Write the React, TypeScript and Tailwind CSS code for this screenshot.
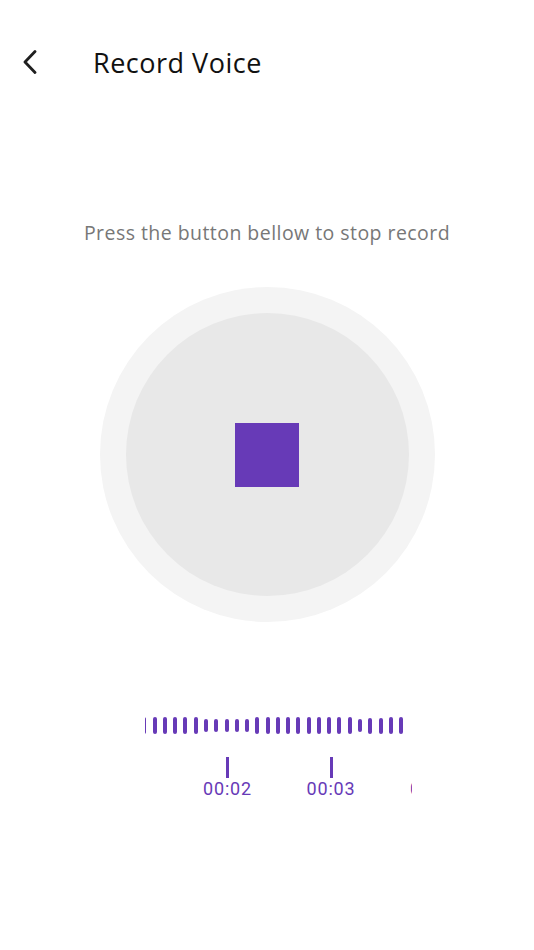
import React from "react";

const bars = [
  17, 17, 17, 17, 17, 17, 13, 13, 13, 13, 13, 17, 17, 17, 17, 17, 17, 17, 17, 17, 17, 13, 16, 16, 17, 17,
];

export default function App() {
  return (
    <div
      className="w-[534px] h-[950px] bg-white relative overflow-hidden"
      style={{ fontFamily: '"Open Sans", "Noto Sans", sans-serif' }}
    >
      {/* Header */}
      <div className="h-[124px] flex items-start">
        <div className="flex items-center h-[24px] mt-[50px]">
          <button className="ml-[20px] w-[20px] h-[24px] flex items-center justify-center">
            <svg width="16" height="24" viewBox="0 0 16 24" fill="none">
              <polyline
                points="13,1.5 3,12 13,22.5"
                stroke="#1f1f1f"
                strokeWidth="2.8"
                strokeLinecap="round"
                strokeLinejoin="round"
              />
            </svg>
          </button>
          <h1 className="ml-[53px] text-[27px] leading-none tracking-[0.5px] text-[#111] font-normal">
            Record Voice
          </h1>
        </div>
      </div>

      {/* Subtitle */}
      <p className="mt-[97px] text-center text-[19.5px] leading-[24px] tracking-[0.45px] text-[#777]">
        Press the button bellow to stop record
      </p>

      {/* Button */}
      <div className="mt-[42px] flex justify-center">
        <div className="w-[335px] h-[335px] rounded-full bg-[#f4f4f4] flex items-center justify-center">
          <div className="w-[283px] h-[283px] rounded-full bg-[#e8e8e8] flex items-center justify-center">
            <div className="w-[64px] h-[64px] bg-[#673ab7]" />
          </div>
        </div>
      </div>

      {/* Timeline */}
      <div className="mt-[95px] ml-[145px] w-[267px] overflow-hidden">
        <div className="h-[17px] flex items-center gap-[6.28px] -ml-[2.6px]">
          {bars.map((h, i) => (
            <div key={i} className="w-[4px] shrink-0 rounded-full bg-[#673ab7]" style={{ height: h }} />
          ))}
        </div>
        <div className="mt-[23px] flex ml-[30.75px]">
          {["00:02", "00:03", "00:04"].map((t) => (
            <div key={t} className="w-[103.5px] shrink-0 flex flex-col items-center">
              <div className="w-[3px] h-[21px] bg-[#673ab7]" />
              <div
                className="mt-[0px] text-[18px] leading-[22px] tracking-[0.8px] text-[#673ab7]"
                style={{ fontFamily: 'Roboto, "Liberation Sans", sans-serif' }}
              >
                {t}
              </div>
            </div>
          ))}
        </div>
      </div>
    </div>
  );
}
